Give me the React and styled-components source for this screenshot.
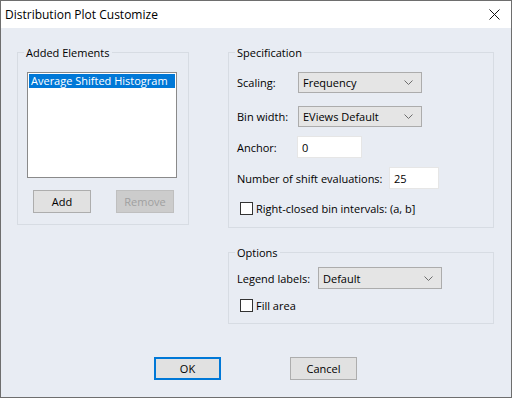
import React from "react";
import styled, { createGlobalStyle } from "styled-components";

const GlobalStyle = createGlobalStyle`
  html, body {
    margin: 0;
    padding: 0;
    background: #ffffff;
  }
  body {
    font-family: "Open Sans", "Noto Sans", sans-serif;
    font-size: 11px;
    color: #000000;
  }
`;

const Window = styled.div`
  width: 512px;
  height: 398px;
  box-sizing: border-box;
  border: 1px solid #6e6e6e;
  display: flex;
  flex-direction: column;
  background: #e8ecf3;
`;

const TitleBar = styled.div`
  height: 27px;
  flex: none;
  background: #ffffff;
  display: flex;
  align-items: center;
  justify-content: space-between;
  padding: 0 11px 0 4px;
  font-size: 12px;
`;

const Body = styled.div`
  flex: 1;
  display: grid;
  grid-template-columns: 172px 266px;
  grid-template-rows: auto auto;
  column-gap: 39px;
  align-content: start;
  padding: 24px 17px 0 16px;
`;

// 테두리 있는 그룹 상자
const Group = styled.div`
  border: 1px solid #d7dce3;
  box-sizing: border-box;
  height: ${(p) => p.h}px;
  margin-top: ${(p) => p.mt || 0}px;
`;

const Legend = styled.div`
  margin: -8px 0 0 6px;
  padding: 0 2px;
  height: 15px;
  line-height: 15px;
  width: fit-content;
  background: #e8ecf3;
`;

const LeftInner = styled.div`
  padding: 12px 0 0 9px;
`;

const ListBox = styled.div`
  width: 150px;
  height: 106px;
  box-sizing: border-box;
  border: 1px solid #8a8a8a;
  background: #ffffff;
  padding: 1px;
`;

const ListItem = styled.div`
  height: 14px;
  line-height: 14px;
  padding-left: 2px;
  background: ${(p) => (p.selected ? "#0078d7" : "transparent")};
  color: ${(p) => (p.selected ? "#ffffff" : "#000000")};
  white-space: nowrap;
`;

const ButtonRow = styled.div`
  display: flex;
  gap: 25px;
  padding-left: 6px;
  margin-top: 12px;
`;

const Button = styled.div`
  width: ${(p) => p.w || 58}px;
  height: 23px;
  box-sizing: border-box;
  display: flex;
  align-items: center;
  justify-content: center;
  background: ${(p) => (p.disabled ? "#cccccc" : "#e1e1e1")};
  border: ${(p) =>
    p.primary ? "2px solid #0078d7" : p.disabled ? "1px solid #bfbfbf" : "1px solid #adadad"};
  color: ${(p) => (p.disabled ? "#a0a0a0" : "#000000")};
`;

const RightColumn = styled.div`
  display: flex;
  flex-direction: column;
`;

const GroupInner = styled.div`
  padding: 0 0 0 8px;
`;

const Row = styled.div`
  display: flex;
  align-items: center;
  height: ${(p) => p.h || 22}px;
  margin-top: ${(p) => p.mt || 0}px;
`;

const Label = styled.div`
  width: ${(p) => p.w}px;
  flex: none;
  white-space: nowrap;
`;

const Combo = styled.div`
  width: 124px;
  height: 100%;
  box-sizing: border-box;
  border: 1px solid #acacac;
  background: #e5e5e5;
  display: flex;
  align-items: center;
  justify-content: space-between;
  padding: 0 8px 0 4px;
`;

const TextInput = styled.div`
  width: ${(p) => p.w}px;
  height: 100%;
  box-sizing: border-box;
  border: 1px solid #e6e6e6;
  background: #ffffff;
  display: flex;
  align-items: center;
  padding-left: 4px;
`;

const CheckRow = styled.div`
  display: flex;
  align-items: center;
  gap: 3px;
  margin: ${(p) => p.mt}px 0 0 3px;
  height: 13px;
`;

const Box = styled.div`
  width: 13px;
  height: 13px;
  box-sizing: border-box;
  border: 1px solid #333333;
  background: #ffffff;
`;

const Footer = styled.div`
  grid-column: 1 / -1;
  display: flex;
  justify-content: center;
  gap: 69px;
  margin-top: 33px;
`;

const Chevron = () => (
  <svg width="9" height="5" viewBox="0 0 9 5">
    <polyline points="0.5,0.5 4.5,4.5 8.5,0.5" fill="none" stroke="#6d6d6d" strokeWidth="1" />
  </svg>
);

const CloseIcon = () => (
  <svg width="11" height="11" viewBox="0 0 11 11">
    <path d="M0.5 0.5 L10.5 10.5 M10.5 0.5 L0.5 10.5" stroke="#111" strokeWidth="1" />
  </svg>
);

export default function App() {
  return (
    <>
      <GlobalStyle />
      <Window>
        <TitleBar>
          <span>Distribution Plot Customize</span>
          <CloseIcon />
        </TitleBar>
        <Body>
          <Group h={173}>
            <Legend>Added Elements</Legend>
            <LeftInner>
              <ListBox>
                <ListItem selected>Average Shifted Histogram</ListItem>
              </ListBox>
              <ButtonRow>
                <Button>Add</Button>
                <Button disabled>Remove</Button>
              </ButtonRow>
            </LeftInner>
          </Group>
          <RightColumn>
            <Group h={176}>
              <Legend>Specification</Legend>
              <GroupInner>
                <Row mt={12} h={21}>
                  <Label w={61}>Scaling:</Label>
                  <Combo>
                    <span>Frequency</span>
                    <Chevron />
                  </Combo>
                </Row>
                <Row mt={13} h={21}>
                  <Label w={61}>Bin width:</Label>
                  <Combo>
                    <span>EViews Default</span>
                    <Chevron />
                  </Combo>
                </Row>
                <Row mt={9}>
                  <Label w={60}>Anchor:</Label>
                  <TextInput w={65}>0</TextInput>
                </Row>
                <Row mt={9}>
                  <Label w={152}>Number of shift evaluations:</Label>
                  <TextInput w={50}>25</TextInput>
                </Row>
                <CheckRow mt={13}>
                  <Box />
                  <span>Right-closed bin intervals: (a, b]</span>
                </CheckRow>
              </GroupInner>
            </Group>
            <Group h={72} mt={24}>
              <Legend>Options</Legend>
              <GroupInner>
                <Row mt={7}>
                  <Label w={81}>Legend labels:</Label>
                  <Combo>
                    <span>Default</span>
                    <Chevron />
                  </Combo>
                </Row>
                <CheckRow mt={10}>
                  <Box />
                  <span>Fill area</span>
                </CheckRow>
              </GroupInner>
            </Group>
          </RightColumn>
          <Footer>
            <Button primary w={67}>OK</Button>
            <Button w={67}>Cancel</Button>
          </Footer>
        </Body>
      </Window>
    </>
  );
}
